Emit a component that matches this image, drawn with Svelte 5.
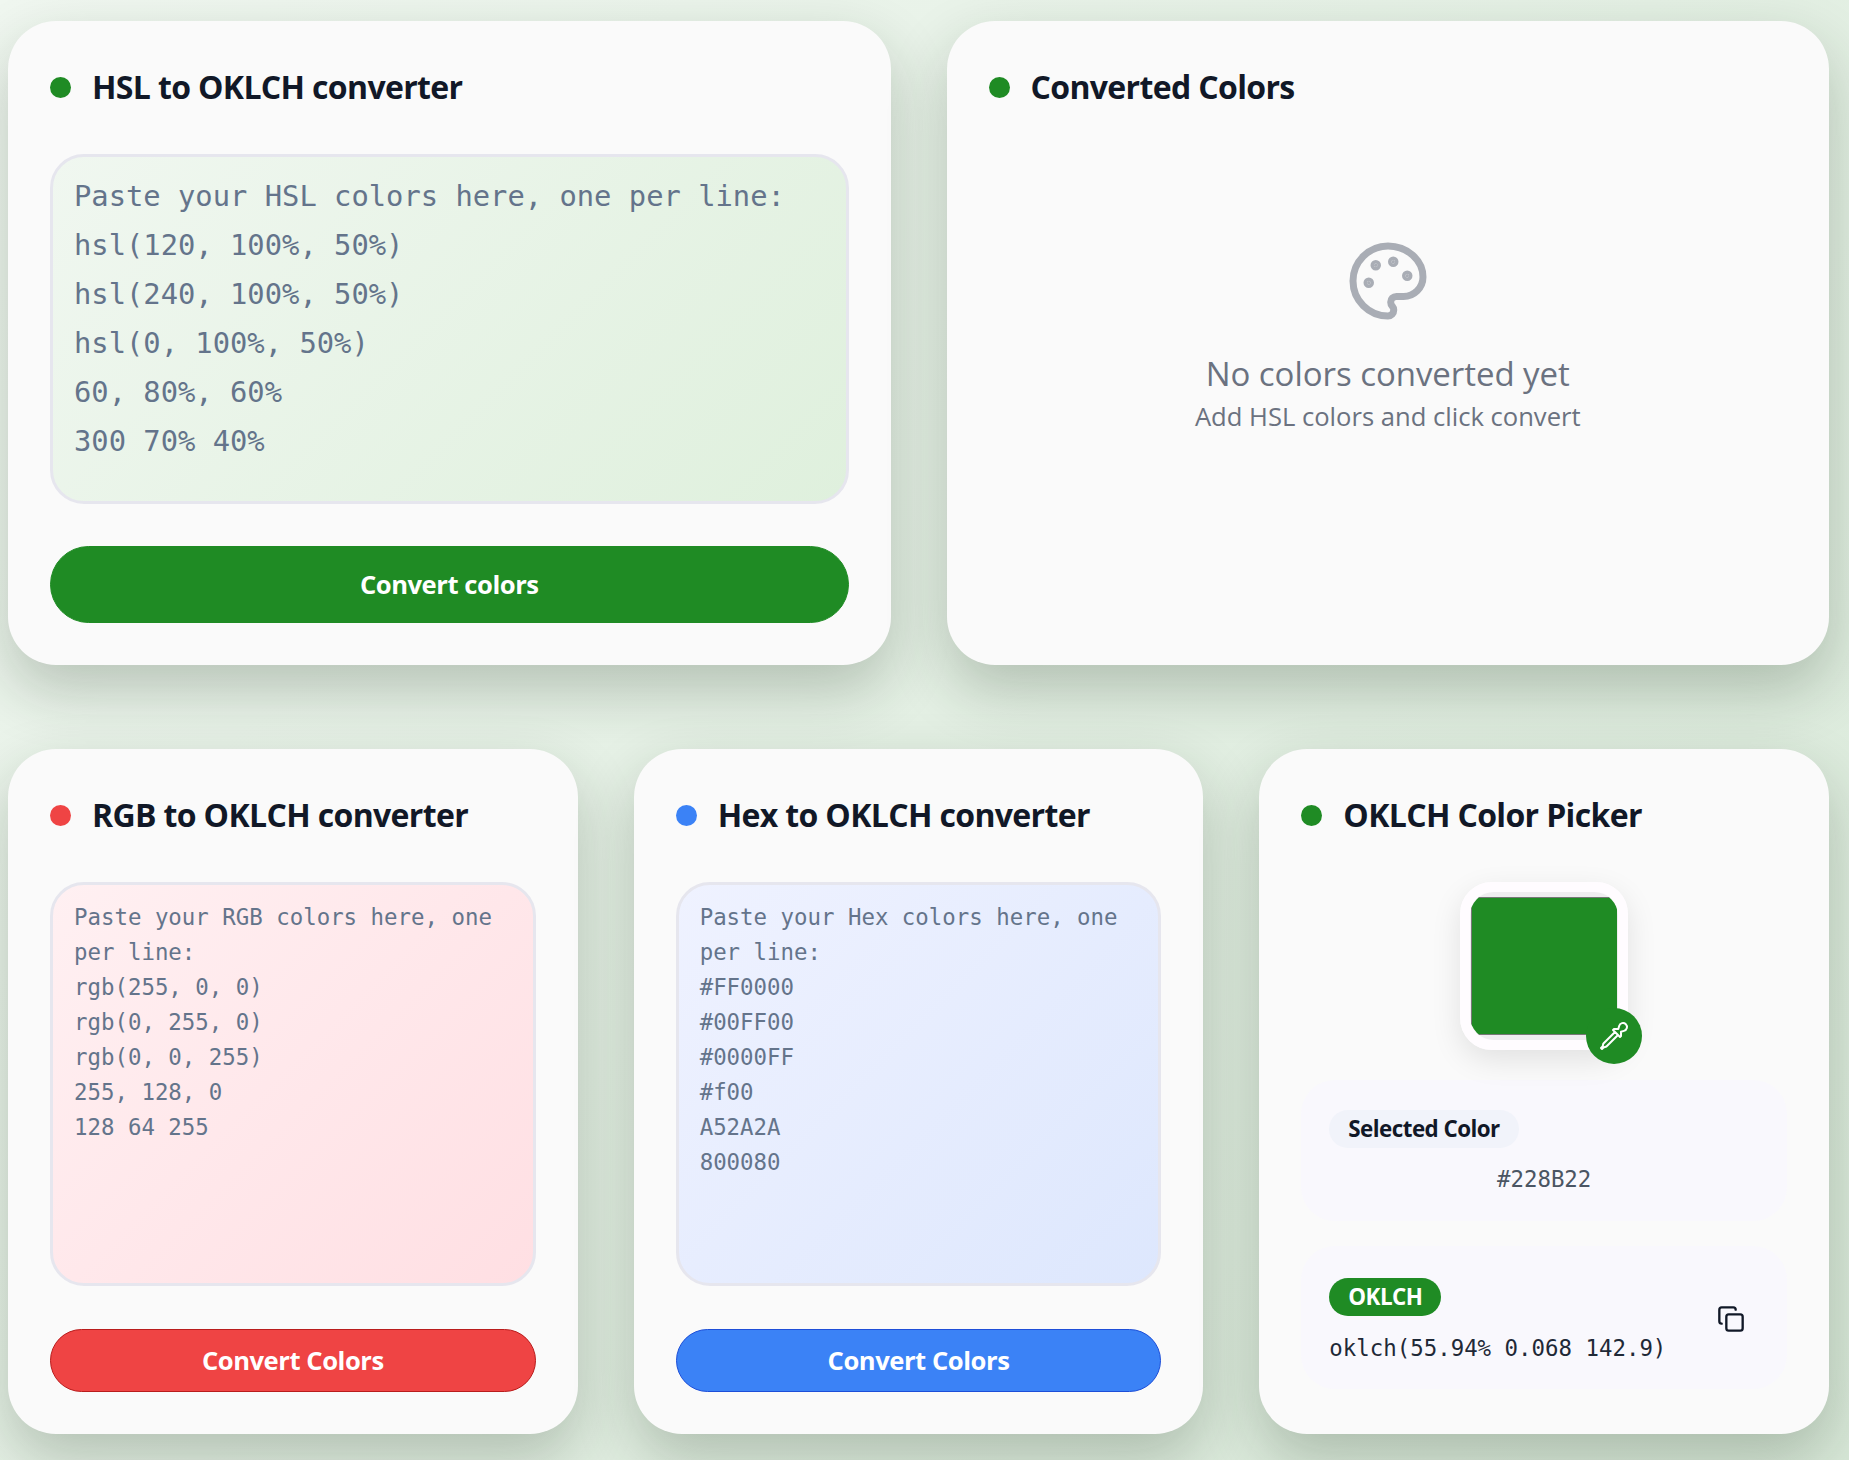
<script>
  const hsl = `Paste your HSL colors here, one per line:
hsl(120, 100%, 50%)
hsl(240, 100%, 50%)
hsl(0, 100%, 50%)
60, 80%, 60%
300 70% 40%`;
  const rgb = `Paste your RGB colors here, one per line:
rgb(255, 0, 0)
rgb(0, 255, 0)
rgb(0, 0, 255)
255, 128, 0
128 64 255`;
  const hex = `Paste your Hex colors here, one per line:
#FF0000
#00FF00
#0000FF
#f00
A52A2A
800080`;
</script>

<main class="page">
  <div class="row two">
    <section class="card">
      <h2><span class="dot green"></span>HSL to OKLCH converter</h2>
      <textarea class="big green-bg" placeholder={hsl}></textarea>
      <button class="convert tall green">Convert colors</button>
    </section>

    <section class="card">
      <h2><span class="dot green"></span>Converted Colors</h2>
      <div class="empty">
        <svg class="palette" viewBox="0 0 24 24" fill="none" stroke="currentColor" stroke-width="2" stroke-linecap="round" stroke-linejoin="round">
          <circle cx="13.5" cy="6.5" r=".5" fill="currentColor" />
          <circle cx="17.5" cy="10.5" r=".5" fill="currentColor" />
          <circle cx="8.5" cy="7.5" r=".5" fill="currentColor" />
          <circle cx="6.5" cy="12.5" r=".5" fill="currentColor" />
          <path d="M12 2C6.5 2 2 6.5 2 12s4.5 10 10 10c.926 0 1.648-.746 1.648-1.688 0-.437-.18-.835-.437-1.125-.29-.289-.438-.652-.438-1.125a1.64 1.64 0 0 1 1.668-1.668h1.996c3.051 0 5.555-2.503 5.555-5.554C21.965 6.012 17.461 2 12 2z" />
        </svg>
        <p class="empty-title">No colors converted yet</p>
        <p class="empty-sub">Add HSL colors and click convert</p>
      </div>
    </section>
  </div>

  <div class="row three">
    <section class="card">
      <h2><span class="dot red"></span>RGB to OKLCH converter</h2>
      <textarea class="small red-bg" placeholder={rgb}></textarea>
      <button class="convert red">Convert Colors</button>
    </section>

    <section class="card">
      <h2><span class="dot blue"></span>Hex to OKLCH converter</h2>
      <textarea class="small blue-bg" placeholder={hex}></textarea>
      <button class="convert blue">Convert Colors</button>
    </section>

    <section class="card">
      <h2><span class="dot green"></span>OKLCH Color Picker</h2>
      <div class="swatch-wrap">
        <div class="swatch">
          <div class="swatch-inner"><div class="swatch-color"></div></div>
        </div>
        <span class="dropper">
          <svg viewBox="0 0 24 24" fill="none" stroke="currentColor" stroke-width="1.5" stroke-linecap="round" stroke-linejoin="round">
            <path d="m15 11.25 1.5 1.5.75-.75V8.758l2.276-.61a3 3 0 1 0-3.675-3.675l-.61 2.277H12l-.75.75 1.5 1.5M15 11.25l-8.47 8.47c-.34.34-.8.53-1.28.53s-.94.19-1.28.53l-.97.97-.75-.75.97-.97c.34-.34.53-.8.53-1.28s.19-.94.53-1.28L12.75 9M15 11.25 12.75 9" />
          </svg>
        </span>
      </div>

      <div class="panel selected">
        <span class="pill light">Selected Color</span>
        <div class="hex">#228B22</div>
      </div>

      <div class="panel oklch">
        <div>
          <span class="pill solid">OKLCH</span>
          <div class="value">oklch(55.94% 0.068 142.9)</div>
        </div>
        <button class="copy" aria-label="Copy">
          <svg viewBox="0 0 24 24" fill="none" stroke="currentColor" stroke-width="2" stroke-linecap="round" stroke-linejoin="round">
            <rect x="8" y="8" width="14" height="14" rx="2" />
            <path d="M4 16c-1.100 0-2-.9-2-2V4c0-1.100.9-2 2-2h10c1.100 0 2 .9 2 2" />
          </svg>
        </button>
      </div>
    </section>
  </div>
</main>

<style>
  :global(body) {
    margin: 0;
    background: linear-gradient(135deg, #f0f7f0 0%, #e4f0e4 50%, #d8e8d8 100%);
    background-attachment: fixed;
  }

  .page {
    box-sizing: border-box;
    min-height: 1460px;
    padding: 21px 20px 26px 8px;
    display: flex;
    flex-direction: column;
    gap: 84px;
    font-family: "Open Sans", "Noto Sans", sans-serif;
  }

  .row {
    display: grid;
    gap: 56px;
  }
  .two {
    grid-template-columns: repeat(2, 1fr);
  }
  .three {
    grid-template-columns: repeat(3, 1fr);
  }

  .card {
    background: #fafafa;
    border-radius: 48px;
    padding: 42px;
    box-shadow: 0 25px 60px rgba(20, 40, 20, 0.24);
    display: flex;
    flex-direction: column;
    min-width: 0;
  }

  h2 {
    display: flex;
    align-items: center;
    gap: 21px;
    margin: 0 0 43px;
    height: 48px;
    font-size: 32px;
    line-height: 46px;
    font-weight: 700;
    letter-spacing: -0.65px;
    color: #111827;
  }

  .dot {
    width: 21px;
    height: 21px;
    border-radius: 50%;
    flex: none;
  }
  .dot.green { background: #1f8b24; }
  .dot.red { background: #ef4444; }
  .dot.blue { background: #3b82f6; }

  textarea {
    display: block;
    box-sizing: border-box;
    width: 100%;
    margin: 0 0 43px;
    border: 3px solid #e6e6ee;
    border-radius: 34px;
    padding: 15px 21px;
    resize: none;
    outline: none;
    font-family: "DejaVu Sans Mono", "Liberation Mono", monospace;
  }
  textarea::placeholder {
    color: #64748b;
    opacity: 1;
  }
  .big {
    height: 350px;
    font-size: 28.8px;
    line-height: 49px;
    margin-bottom: 42px;
  }
  .small {
    height: 404px;
    font-size: 22.4px;
    line-height: 35px;
  }
  .green-bg { background: linear-gradient(135deg, #f0f7f0, #dff0dd); }
  .red-bg { background: linear-gradient(135deg, #fff0f2, #ffdfe3); }
  .blue-bg { background: linear-gradient(135deg, #eff2ff, #dde7fd); }

  .convert {
    display: block;
    width: 100%;
    height: 63px;
    border-radius: 32px;
    border: 1px solid;
    color: #fff;
    font: 700 25.6px "Open Sans", "Noto Sans", sans-serif;
    letter-spacing: -0.45px;
  }
  .convert.tall {
    height: 77px;
    border-radius: 39px;
  }
  .convert.green { background: #1f8b24; border-color: #1f8b24; }
  .convert.red { background: #ef4444; border-color: #b91c1c; }
  .convert.blue { background: #3b82f6; border-color: #1d4ed8; }

  .empty {
    display: flex;
    flex-direction: column;
    align-items: center;
    padding-top: 85px;
    color: #6b7280;
  }
  .palette {
    width: 84px;
    height: 84px;
    color: #a9adb5;
    margin-bottom: 29px;
  }
  .empty p {
    margin: 0;
  }
  .empty-title {
    font-size: 33px;
    line-height: 44px;
    letter-spacing: -0.05px;
  }
  .empty .empty-sub {
    margin-top: 1px;
    font-size: 25.6px;
    line-height: 40px;
  }

  .swatch-wrap {
    position: relative;
    width: 168px;
    height: 168px;
    align-self: center;
    margin-bottom: 30px;
  }
  .swatch {
    box-sizing: border-box;
    width: 100%;
    height: 100%;
    border: 10px solid #fffcff;
    border-radius: 32px;
    box-shadow: 0 10px 30px rgba(0, 0, 0, 0.1);
    overflow: hidden;
  }
  .swatch-inner {
    height: 100%;
    background: #efedf0;
    padding: 5px 1px;
    box-sizing: border-box;
    border-radius: 24px;
    overflow: hidden;
  }
  .swatch-color {
    height: 100%;
    box-sizing: border-box;
    background: #1f8b24;
    border: 1px solid #777;
    border-right: 0;
  }
  .dropper {
    position: absolute;
    right: -14px;
    bottom: -14px;
    width: 56px;
    height: 56px;
    border-radius: 50%;
    background: #1f8b24;
    color: #fff;
    display: flex;
    align-items: center;
    justify-content: center;
  }
  .dropper svg {
    width: 32px;
    height: 32px;
  }

  .panel {
    box-sizing: border-box;
    background: #f9f8fd;
    border-radius: 34px;
    padding: 30px 28px 0;
  }
  .selected {
    height: 141px;
    margin-bottom: 25px;
  }
  .oklch {
    height: 143px;
    padding-top: 32px;
    display: flex;
    justify-content: space-between;
    align-items: flex-start;
  }

  .pill {
    display: inline-block;
    height: 38px;
    line-height: 37px;
    padding: 0 19px;
    border-radius: 19px;
    font-size: 22.4px;
    font-weight: 700;
    letter-spacing: -0.55px;
  }
  .pill.light {
    background: #f1f3fa;
    color: #111827;
  }
  .pill.solid {
    background: #1f8b24;
    color: #fff;
  }

  .hex {
    margin-top: 14px;
    text-align: center;
    font: 22.4px/34px "DejaVu Sans Mono", monospace;
    color: #4b5563;
  }
  .value {
    margin-top: 15px;
    font: 22.4px/34px "DejaVu Sans Mono", monospace;
    color: #1f2937;
    white-space: nowrap;
  }

  .copy {
    border: 0;
    background: none;
    padding: 0;
    margin: 27px 14px 0 0;
    width: 28px;
    height: 28px;
    color: #111827;
  }
  .copy svg {
    display: block;
    width: 28px;
    height: 28px;
  }
</style>
